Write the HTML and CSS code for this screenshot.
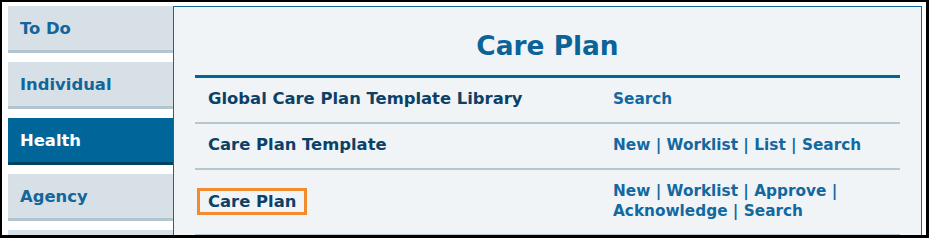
FILE: index.html
```html
<!DOCTYPE html>
<html>
<head>
<meta charset="utf-8">
<link rel="stylesheet" href="styles.css">
</head>
<body>
<div class="frame">
  <nav class="sidebar">
    <div class="tab">To Do</div>
    <div class="tab">Individual</div>
    <div class="tab active">Health</div>
    <div class="tab">Agency</div>
    <div class="tab"></div>
  </nav>
  <main class="panel">
    <h1 class="title">Care Plan</h1>
    <div class="table">
      <div class="row">
        <div class="label">Global Care Plan Template Library</div>
        <div class="links"><a>Search</a></div>
      </div>
      <div class="row">
        <div class="label">Care Plan Template</div>
        <div class="links"><a>New</a> | <a>Worklist</a> | <a>List</a> | <a>Search</a></div>
      </div>
      <div class="row">
        <div class="label"><span class="highlight">Care Plan</span></div>
        <div class="links"><a>New</a> | <a>Worklist</a> | <a>Approve</a> | <a>Acknowledge</a> | <a>Search</a></div>
      </div>
    </div>
  </main>
</div>
</body>
</html>
```

FILE: styles.css
```css
html, body {
  margin: 0;
  padding: 0;
  background: #ffffff;
}

.frame {
  box-sizing: border-box;
  width: 929px;
  height: 238px;
  border-style: solid;
  border-color: #000000;
  border-width: 2px 3px 3px 2px;
  padding: 4px 4px 0 6px;
  display: flex;
  overflow: hidden;
  font-family: "DejaVu Sans", Verdana, sans-serif;
  font-weight: bold;
}

.sidebar {
  width: 165px;
  flex: none;
  display: flex;
  flex-direction: column;
}

.tab {
  flex: none;
  box-sizing: border-box;
  height: 47px;
  margin-bottom: 9px;
  padding: 2px 0 0 12px;
  line-height: 42px;
  font-size: 16.4px;
  color: #13659a;
  background: #d7e0e7;
  border-bottom: 3px solid #b2c4d0;
}

.tab.active {
  background: #006699;
  color: #ffffff;
  border-bottom-color: #00425f;
}

.panel {
  flex: 1;
  min-width: 0;
  background: #f0f4f7;
  border: 1px solid #17659a;
  border-bottom: none;
  padding: 0 21px;
}

.title {
  margin: 0;
  padding-top: 10px;
  height: 58px;
  line-height: 58px;
  text-align: center;
  font-size: 26.4px;
  font-weight: bold;
  color: #0b6397;
}

.table {
  border-top: 3px solid #006699;
}

.row {
  display: grid;
  grid-template-columns: 405px 1fr;
  align-items: center;
  border-bottom: 2px solid #b6c7d2;
}

.label {
  padding: 11px 13px 13px;
  line-height: 20px;
  font-size: 16.4px;
  color: #0c4167;
}

.links {
  padding: 11px 13px 13px;
  line-height: 20px;
  font-size: 15.3px;
  color: #13689f;
}

.links a {
  color: #13689f;
  text-decoration: none;
}

.highlight {
  display: inline-block;
  margin-left: -11px;
  padding: 0 8px;
  border: 3px solid #f28a2e;
  line-height: 21px;
}
```
